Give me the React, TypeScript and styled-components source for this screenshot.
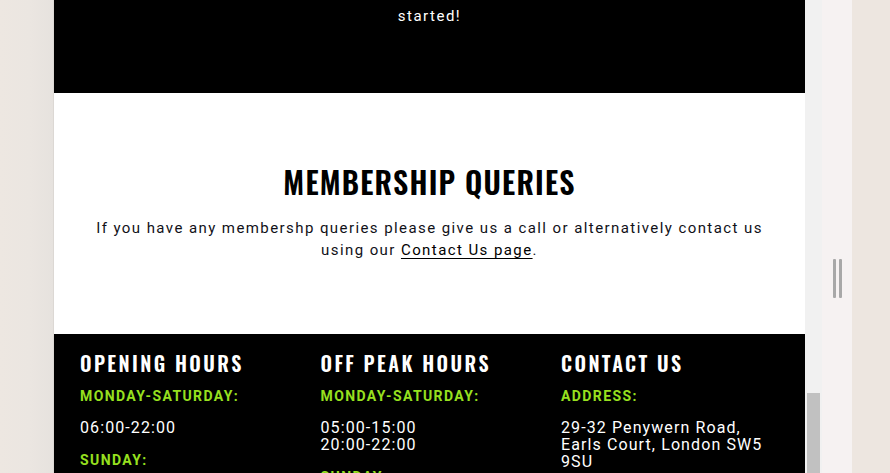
import React from "react";
import styled, { createGlobalStyle } from "styled-components";

const GlobalStyle = createGlobalStyle`
  html, body {
    margin: 0;
    padding: 0;
    height: 100%;
    overflow: hidden;
    background: #ede6e0;
  }
  #root { height: 100%; }
`;

const Frame = styled.div`
  display: flex;
  width: 890px;
  height: 473px;
  overflow: hidden;
`;

const Gutter = styled.div`
  width: 54px;
  flex: none;
  background: linear-gradient(to right, #ede7e1 0%, #ebe6e1 55%, #e6e2de 100%);
  box-shadow: inset -1px 0 0 #dcd8d4;
`;

const Page = styled.main`
  width: 751px;
  flex: none;
  display: flex;
  flex-direction: column;
  overflow: hidden;
  font-family: Roboto, "Liberation Sans", sans-serif;
`;

const Hero = styled.section`
  height: 93px;
  flex: none;
  background: #000;
  color: #fff;
  text-align: center;
  overflow: hidden;
`;

const HeroText = styled.p`
  margin: -20px 0 0;
  font-size: 15px;
  line-height: 24px;
  letter-spacing: 1.5px;
`;

const Queries = styled.section`
  height: 241px;
  flex: none;
  box-sizing: border-box;
  background: #fff;
  padding-top: 67px;
  display: flex;
  flex-direction: column;
  align-items: center;
  text-align: center;
`;

const Title = styled.h2`
  margin: 0;
  font-family: "Oswald", "Liberation Sans Narrow", "DejaVu Sans Condensed", sans-serif;
  font-weight: 600;
  font-size: 30px;
  line-height: 43px;
  letter-spacing: 1.2px;
  color: #000;
`;

const Lead = styled.p`
  margin: 14px 0 0;
  font-size: 15px;
  line-height: 22px;
  letter-spacing: 1.42px;
  color: #111118;
`;

const LeadLink = styled.a`
  color: #000;
  text-decoration: underline;
  text-underline-offset: 3px;
  text-decoration-thickness: 1px;
`;

const Footer = styled.footer`
  flex: 1;
  background: #000;
  color: #fff;
  box-sizing: border-box;
  padding: 16px 0 0 26px;
  display: grid;
  grid-template-columns: repeat(3, 240.5px);
  align-content: start;
`;

const Column = styled.div`
  display: flex;
  flex-direction: column;
  align-items: flex-start;
`;

const ColTitle = styled.h3`
  margin: 0 0 11px;
  font-family: "Oswald", "Liberation Sans Narrow", "DejaVu Sans Condensed", sans-serif;
  font-weight: 600;
  font-size: 20px;
  line-height: 27px;
  letter-spacing: 2.4px;
  color: #fff;
`;

const Label = styled.p`
  margin: 0 0 14px;
  font-size: 14px;
  line-height: 17px;
  font-weight: 700;
  letter-spacing: 1.4px;
  color: #97e01f;
`;

const Value = styled.p`
  margin: 0 0 16px;
  font-size: 16px;
  line-height: 17px;
  letter-spacing: 1.1px;
  color: #fff;
`;

const Scrollbar = styled.div`
  width: 17px;
  flex: none;
  background: #f1f1f1;
  display: flex;
  flex-direction: column;
  justify-content: flex-end;
  align-items: center;
`;

const Thumb = styled.div`
  width: 13px;
  height: 80px;
  background: #c1c1c1;
`;

const SidePane = styled.div`
  width: 30px;
  flex: none;
  background: #f6f2f2;
  display: flex;
  justify-content: center;
  gap: 3px;
  padding-top: 259px;
  box-sizing: border-box;
`;

const Grip = styled.div`
  width: 3px;
  height: 39px;
  border-radius: 1px;
  background: #a8a8a8;
`;

const Rest = styled.div`
  flex: 1;
  background: #ede6e0;
`;

const hours = [
  {
    title: "OPENING HOURS",
    rows: [
      { label: "MONDAY-SATURDAY:", value: ["06:00-22:00"] },
      { label: "SUNDAY:", value: ["08:00-20:00"] },
    ],
  },
  {
    title: "OFF PEAK HOURS",
    rows: [
      { label: "MONDAY-SATURDAY:", value: ["05:00-15:00", "20:00-22:00"] },
      { label: "SUNDAY:", value: ["All day"] },
    ],
  },
  {
    title: "CONTACT US",
    rows: [
      {
        label: "ADDRESS:",
        value: ["29-32 Penywern Road,", "Earls Court, London SW5", "9SU"],
      },
    ],
  },
];

export default function App() {
  return (
    <>
      <GlobalStyle />
      <Frame>
        <Gutter />
        <Page>
          <Hero>
            <HeroText>
              Come in and see us at the club and we will have you
              <br />
              started!
            </HeroText>
          </Hero>
          <Queries>
            <Title>MEMBERSHIP QUERIES</Title>
            <Lead>
              If you have any membershp queries please give us a call or alternatively contact us
              <br />
              using our <LeadLink href="#">Contact Us page</LeadLink>.
            </Lead>
          </Queries>
          <Footer>
            {hours.map((col) => (
              <Column key={col.title}>
                <ColTitle>{col.title}</ColTitle>
                {col.rows.map((row) => (
                  <React.Fragment key={row.label}>
                    <Label>{row.label}</Label>
                    <Value>
                      {row.value.map((line, i) => (
                        <React.Fragment key={line}>
                          {i > 0 && <br />}
                          {line}
                        </React.Fragment>
                      ))}
                    </Value>
                  </React.Fragment>
                ))}
              </Column>
            ))}
          </Footer>
        </Page>
        <Scrollbar>
          <Thumb />
        </Scrollbar>
        <SidePane>
          <Grip />
          <Grip />
        </SidePane>
        <Rest />
      </Frame>
    </>
  );
}
